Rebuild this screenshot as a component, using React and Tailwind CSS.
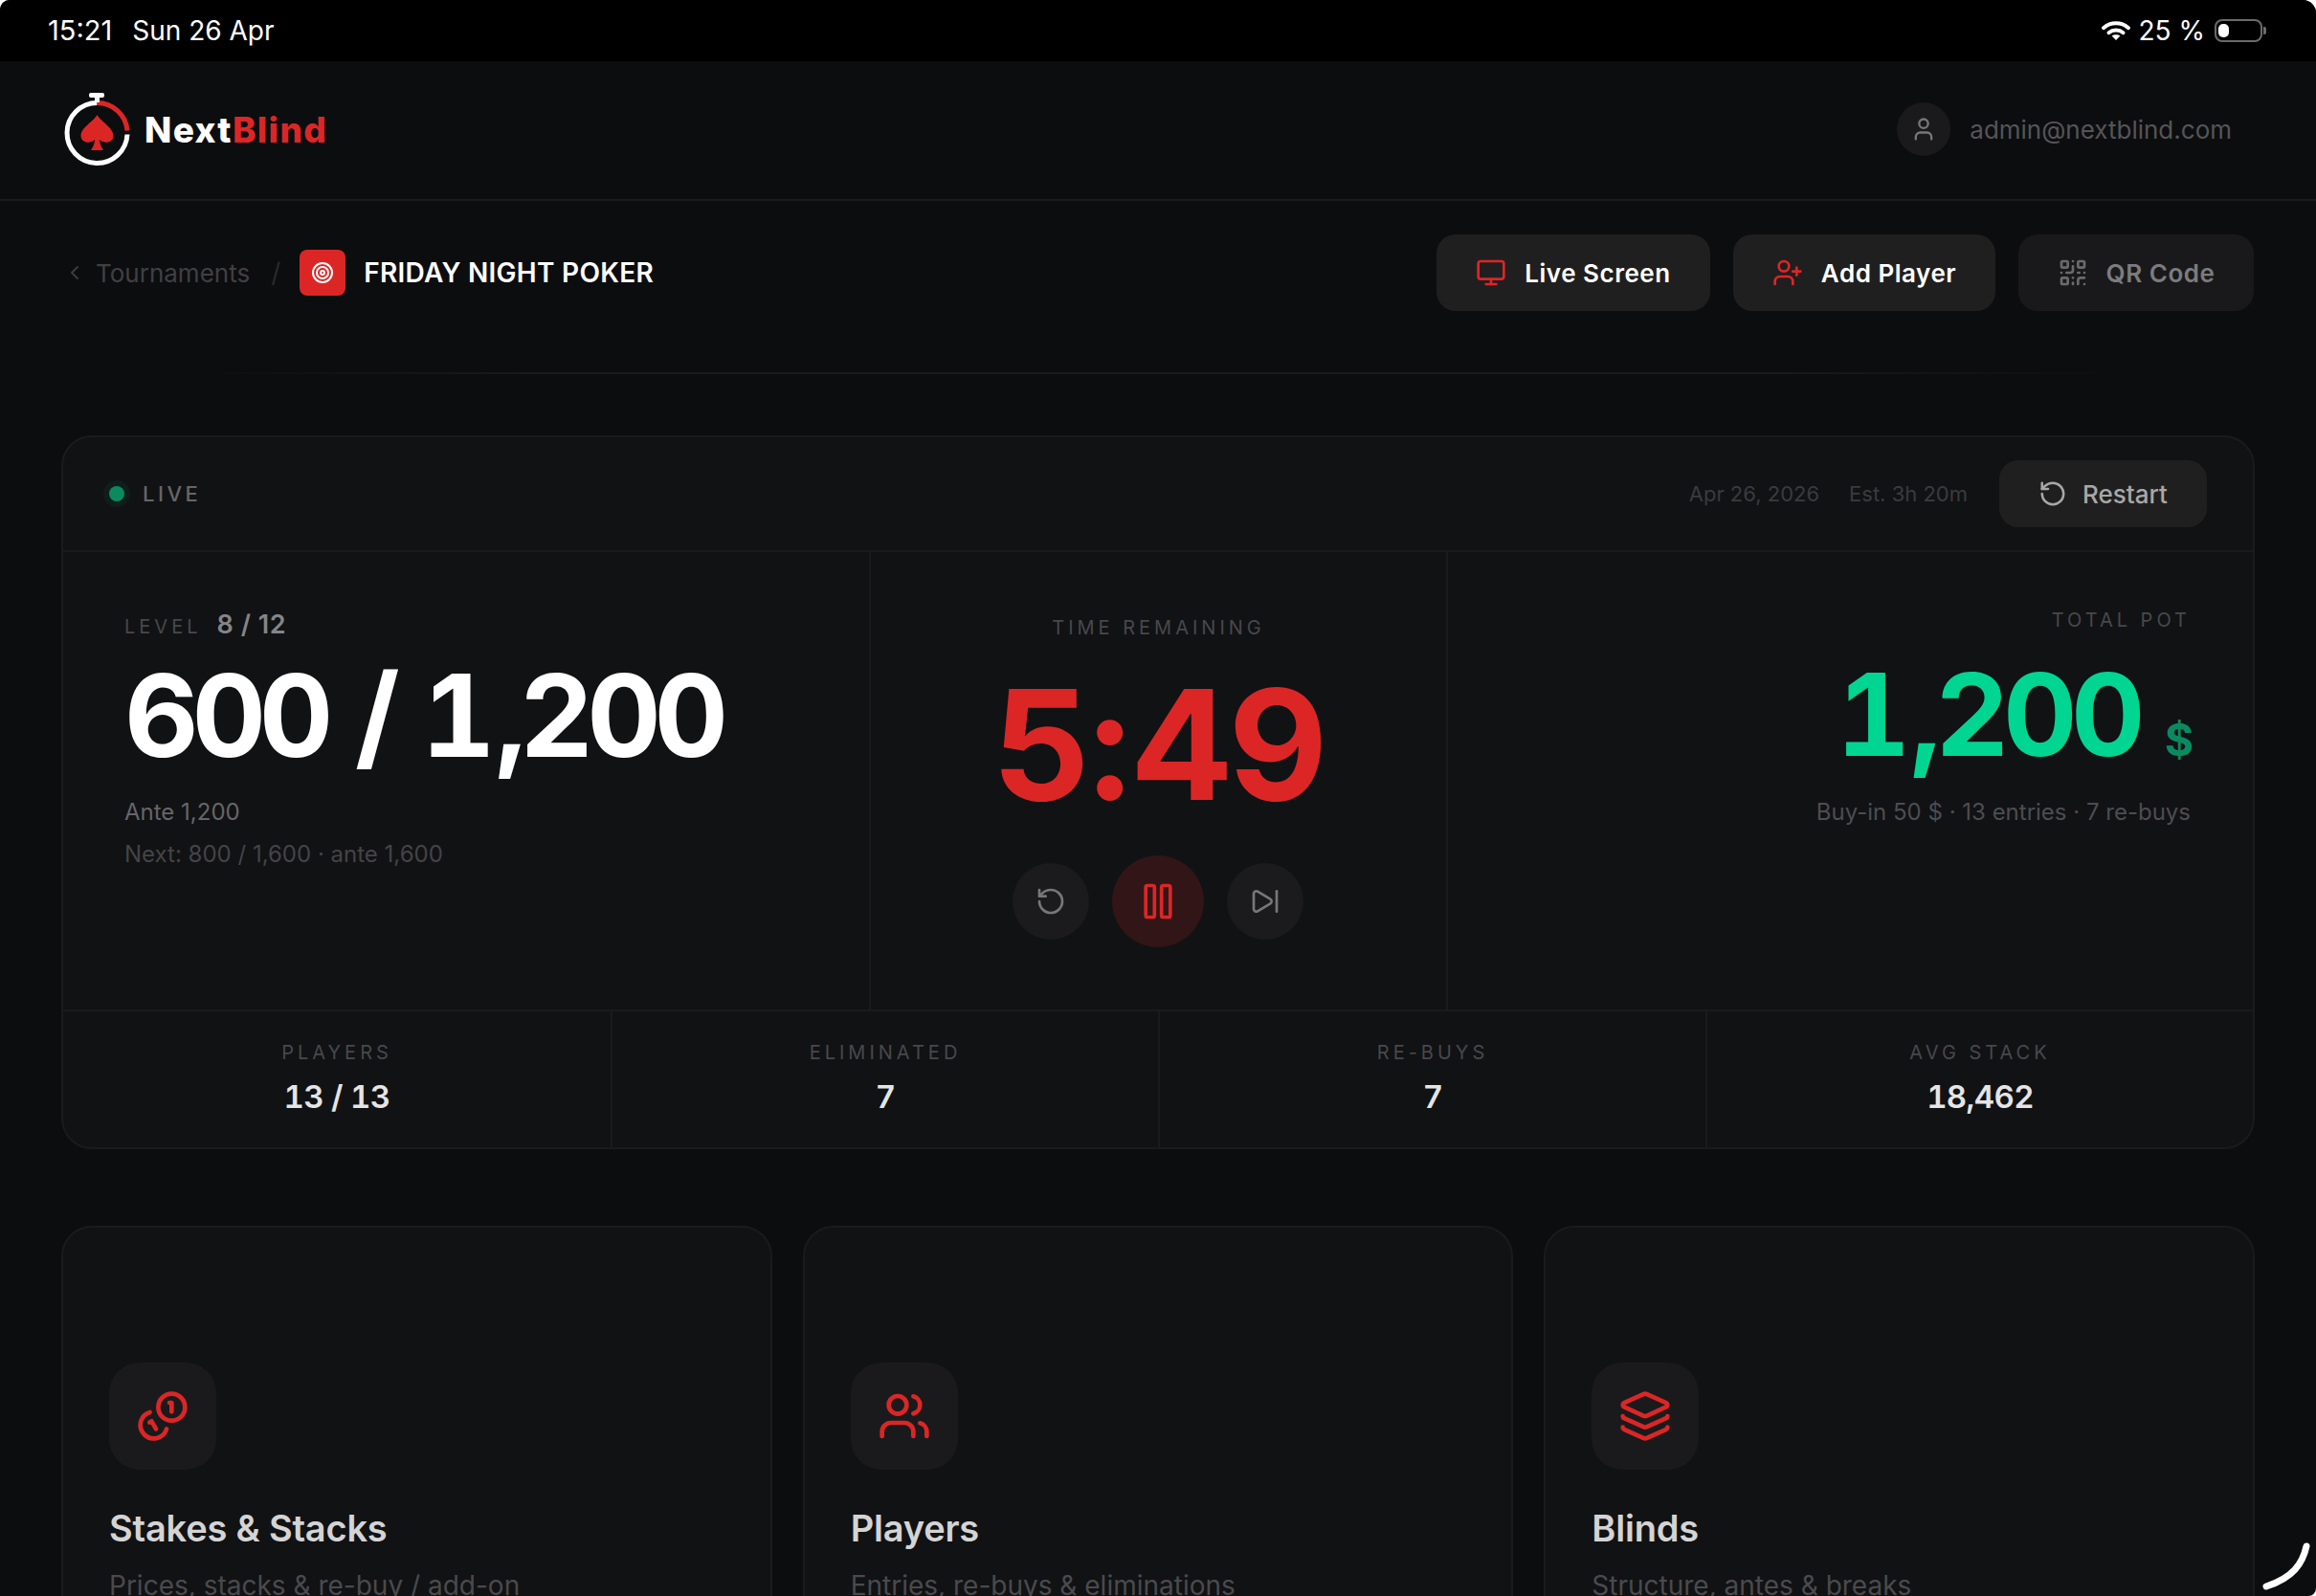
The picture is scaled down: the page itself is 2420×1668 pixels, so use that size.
import { ChevronLeft, Layers, Monitor, Pause, QrCode, RotateCcw, SkipForward, Target, User, UserPlus, Users } from "lucide-react";

const Logo = () => (
  <svg width="76" height="80" viewBox="0 0 76 80" fill="none">
    <path d="M69 45.5A31.5 31.5 0 1 1 37.5 12.5" stroke="#fff" strokeWidth="5" />
    <path d="M37.5 12.5A31.5 31.5 0 0 1 69 41.5" stroke="#dc2626" strokeWidth="5" />
    <rect x="29" y="2" width="16" height="5" rx="2" fill="#fff" />
    <rect x="35" y="6" width="5" height="6" fill="#fff" />
    <path
      d="M37.5 25C33 33 20.5 38 20.5 47C20.5 54 30 56 35 51C35 55 33 59 31 62L44 62C42 59 40 55 40 51C45 56 54.5 54 54.5 47C54.5 38 42 33 37.5 25Z"
      fill="#dc2626"
    />
  </svg>
);

const Wifi = () => (
  <svg width="30" height="20" viewBox="0 0 30 20" fill="none" stroke="#fff" strokeWidth="3.8" strokeLinecap="round">
    <path d="M2 7.2C9.5 0.6 20.5 0.6 28 7.2" />
    <path d="M7.4 12.2C11.8 8.6 18.2 8.6 22.6 12.2" />
    <path d="M15 20L10.6 15.6C13 13.8 17 13.8 19.4 15.6Z" fill="#fff" stroke="none" />
  </svg>
);

const CoinsIcon = () => (
  <svg width="56" height="56" viewBox="0 0 24 24" fill="none" stroke="#dc2626" strokeWidth="2" strokeLinecap="round" strokeLinejoin="round">
    <path d="M13.744 17.736a6 6 0 1 1-7.48-7.48" />
    <path d="M15 6h1v4" />
    <path d="m6.134 14.768.866-.5 2 3.464" />
    <circle cx="16" cy="8" r="6" />
  </svg>
);

const ActionButton = ({ icon: Icon, label, width, dim }) => (
  <button
    className={`flex h-20 items-center justify-center gap-[19px] rounded-[20px] text-[26px] font-semibold tracking-[0.02em] ${width} ${
      dim ? "bg-[#19191b] text-[#7c7c7e]" : "bg-[#201f20] text-white"
    }`}
  >
    <Icon size={32} strokeWidth={2} className={dim ? "text-[#6a6a6c]" : "text-[#dc2626]"} />
    {label}
  </button>
);

const Stat = ({ label, value, first }) => (
  <div className={`flex flex-col items-center pt-[31px] ${first ? "" : "border-l-2 border-[#1a1b1d]"}`}>
    <div className="text-[20px] leading-6 tracking-[0.2em] text-[#48484a]">{label}</div>
    <div className="mt-[14px] text-[33px] leading-10 font-semibold tracking-[-0.02em] text-[#e5e5e5] tabular-nums">{value}</div>
  </div>
);

const Card = ({ icon, title, sub }) => (
  <div className="h-[420px] rounded-[32px] border-2 border-[#1a1b1d] bg-[#111214] pt-[141px] pl-[48px]">
    <div className="flex h-28 w-28 items-center justify-center rounded-[32px] bg-[#1a1a1c]">{icon}</div>
    <div className="mt-[37px] text-[38px] leading-[48px] font-semibold tracking-[-0.005em] text-[#d4d4d4]">{title}</div>
    <div className="mt-[18px] text-[28px] leading-9 text-[#4a4a4c]">{sub}</div>
  </div>
);

export default function App() {
  return (
    <div className="h-[1668px] w-[2420px] overflow-hidden bg-white font-[Inter,sans-serif]">
      <div className="relative h-[1668px] overflow-hidden rounded-tl-[10px] rounded-tr-[14px] rounded-br-[8px] bg-[#0c0d0f]">
        {/* status bar */}
        <div className="flex h-16 items-center justify-between bg-black pr-[52px] pl-[50px] text-[28px] text-white">
          <div className="flex items-center gap-[21px]">
            <span className="text-[29px]">15:21</span>
            <span>Sun 26 Apr</span>
          </div>
          <div className="flex items-center">
            <Wifi />
            <span className="ml-[9px]">25 %</span>
            <div className="ml-[10px] flex h-6 w-[50px] items-center rounded-[8px] border-2 border-[#6b6b6b] pl-[2px]">
              <div className="h-[14px] w-[11px] rounded-[5px] bg-white" />
            </div>
            <div className="ml-[1px] h-[8px] w-[3px] rounded-r-[2px] bg-[#6b6b6b]" />
          </div>
        </div>

        {/* header */}
        <div className="flex h-[146px] items-center justify-between border-b-2 border-[#1a1b1d] pr-[88px] pb-[2px] pl-[64px]">
          <div className="flex items-center gap-[11px]">
            <Logo />
            <div className="text-[37px] leading-none font-extrabold tracking-[0.036em] text-white">
              Next<span className="text-[#dc2626]">Blind</span>
            </div>
          </div>
          <div className="flex items-center gap-[20px]">
            <div className="flex h-14 w-14 items-center justify-center rounded-full bg-[#1a1a1c]">
              <User size={28} className="text-[#77777a]" />
            </div>
            <span className="text-[26px] text-[#555557]">admin@nextblind.com</span>
          </div>
        </div>

        {/* tournament bar */}
        <div className="flex h-[179px] items-start justify-between pt-[35px] pr-[65px] pl-[66px]">
          <div className="flex h-20 items-center">
            <ChevronLeft size={24} className="text-[#3d3d3f]" />
            <span className="ml-[10px] text-[26px] text-[#404042]">Tournaments</span>
            <span className="ml-[22px] text-[28px] text-[#2a2a2c]">/</span>
            <div className="ml-[20px] flex h-12 w-12 items-center justify-center rounded-[8px] bg-[#dc2626]">
              <Target size={24} className="text-white" />
            </div>
            <span className="ml-[19px] text-[28px] font-semibold tracking-[0.01em] text-white">FRIDAY NIGHT POKER</span>
          </div>
          <div className="flex gap-6">
            <ActionButton icon={Monitor} label="Live Screen" width="w-[286px]" />
            <ActionButton icon={UserPlus} label="Add Player" width="w-[274px]" />
            <ActionButton icon={QrCode} label="QR Code" width="w-[246px]" dim />
          </div>
        </div>
        <div className="mx-[190px] h-[2px] bg-[linear-gradient(90deg,transparent,#1a1b1d_20%,#1a1b1d_80%,transparent)]" />

        {/* main card */}
        <div className="mx-[64px] mt-[64px] rounded-[32px] border-2 border-[#1a1b1d] bg-[#111214]">
          <div className="flex h-[120px] items-center justify-between border-b-2 border-[#1a1b1d] px-[48px]">
            <div className="flex items-center gap-[19px]">
              <div className="h-4 w-4 rounded-full bg-[#0a8a5e] shadow-[0_0_0_6px_rgba(10,138,94,0.1)]" />
              <span className="text-[22px] font-medium tracking-[0.16em] text-[#666668]">LIVE</span>
            </div>
            <div className="flex items-center">
              <span className="text-[22px] text-[#3a3b3d]">Apr 26, 2026</span>
              <span className="ml-[31px] text-[22px] text-[#3a3b3d]">Est. 3h 20m</span>
              <button className="ml-[33px] flex h-[70px] w-[217px] items-center justify-center gap-[16px] rounded-[20px] bg-[#201f20] text-[26px] font-medium text-[#a8a8a8]">
                <RotateCcw size={30} />
                Restart
              </button>
            </div>
          </div>

          <div className="grid h-[480px] grid-cols-[842px_605px_1fr] border-b-2 border-[#1a1b1d]">
            <div className="pt-[60px] pl-[64px]">
              <div className="flex items-baseline gap-[16px]">
                <span className="text-[20px] tracking-[0.2em] text-[#48484a]">LEVEL</span>
                <span className="text-[27px] leading-8 font-semibold tracking-[0.02em] text-[#858587]">8 / 12</span>
              </div>
              <div className="mt-[18px] text-[120px] leading-[120px] font-bold tracking-[-0.06em] [word-spacing:0.04em] text-white tabular-nums">
                600 / <span className="tracking-normal">1</span>,200
              </div>
              <div className="mt-[25px] text-[24px] leading-8 text-[#666668]">Ante 1,200</div>
              <div className="mt-[12px] text-[24px] leading-8 text-[#444446]">Next: 800 / 1,600 · ante 1,600</div>
            </div>

            <div className="flex flex-col items-center border-x-2 border-[#1a1b1d] pt-[67px]">
              <div className="text-[20px] leading-6 tracking-[0.2em] text-[#48484a]">TIME REMAINING</div>
              <div className="mt-[30px] -ml-[3px] text-[160px] leading-[160px] font-bold tracking-[-0.035em] text-[#dc2626]">5:49</div>
              <div className="mt-[36px] -ml-[1px] flex items-center gap-6">
                <button className="flex h-20 w-20 items-center justify-center rounded-full bg-[#1b1b1d]">
                  <RotateCcw size={32} className="text-[#77777a]" />
                </button>
                <button className="flex h-24 w-24 items-center justify-center rounded-full bg-[#311517]">
                  <Pause size={44} className="text-[#dc2626]" />
                </button>
                <button className="flex h-20 w-20 items-center justify-center rounded-full bg-[#1b1b1d]">
                  <SkipForward size={32} className="text-[#77777a]" />
                </button>
              </div>
            </div>

            <div className="flex flex-col items-end pt-[59px] pr-[65px]">
              <div className="text-[20px] leading-6 tracking-[0.2em] text-[#48484a]">TOTAL POT</div>
              <div className="mt-[27px] -mr-[3px] flex items-baseline gap-[27px]">
                <span className="text-[120px] leading-[120px] font-bold tracking-[-0.055em] text-[#00d692] tabular-nums">
                  <span className="tracking-normal">1</span>,200
                </span>
                <span className="text-[46px] leading-none font-bold text-[#0a8a62]">$</span>
              </div>
              <div className="mt-[26px] text-[24px] leading-8 text-[#4d4d4f]">Buy-in 50 $ · 13 entries · 7 re-buys</div>
            </div>
          </div>

          <div className="grid h-[142px] grid-cols-4">
            <Stat label="PLAYERS" value="13 / 13" first />
            <Stat label="ELIMINATED" value="7" />
            <Stat label="RE-BUYS" value="7" />
            <Stat label="AVG STACK" value="18,462" />
          </div>
        </div>

        {/* section cards */}
        <div className="mx-[64px] mt-[80px] grid grid-cols-3 gap-8">
          <Card icon={<CoinsIcon />} title="Stakes & Stacks" sub="Prices, stacks & re-buy / add-on" />
          <Card icon={<Users size={56} className="text-[#dc2626]" />} title="Players" sub="Entries, re-buys & eliminations" />
          <Card icon={<Layers size={56} className="text-[#dc2626]" />} title="Blinds" sub="Structure, antes & breaks" />
        </div>

        {/* corner mark */}
        <svg className="absolute right-0 bottom-0" width="64" height="64" viewBox="0 0 64 64" fill="none">
          <path d="M54 12C50 30 40 45 12 54" stroke="#fff" strokeWidth="7" strokeLinecap="round" />
        </svg>
      </div>
    </div>
  );
}
